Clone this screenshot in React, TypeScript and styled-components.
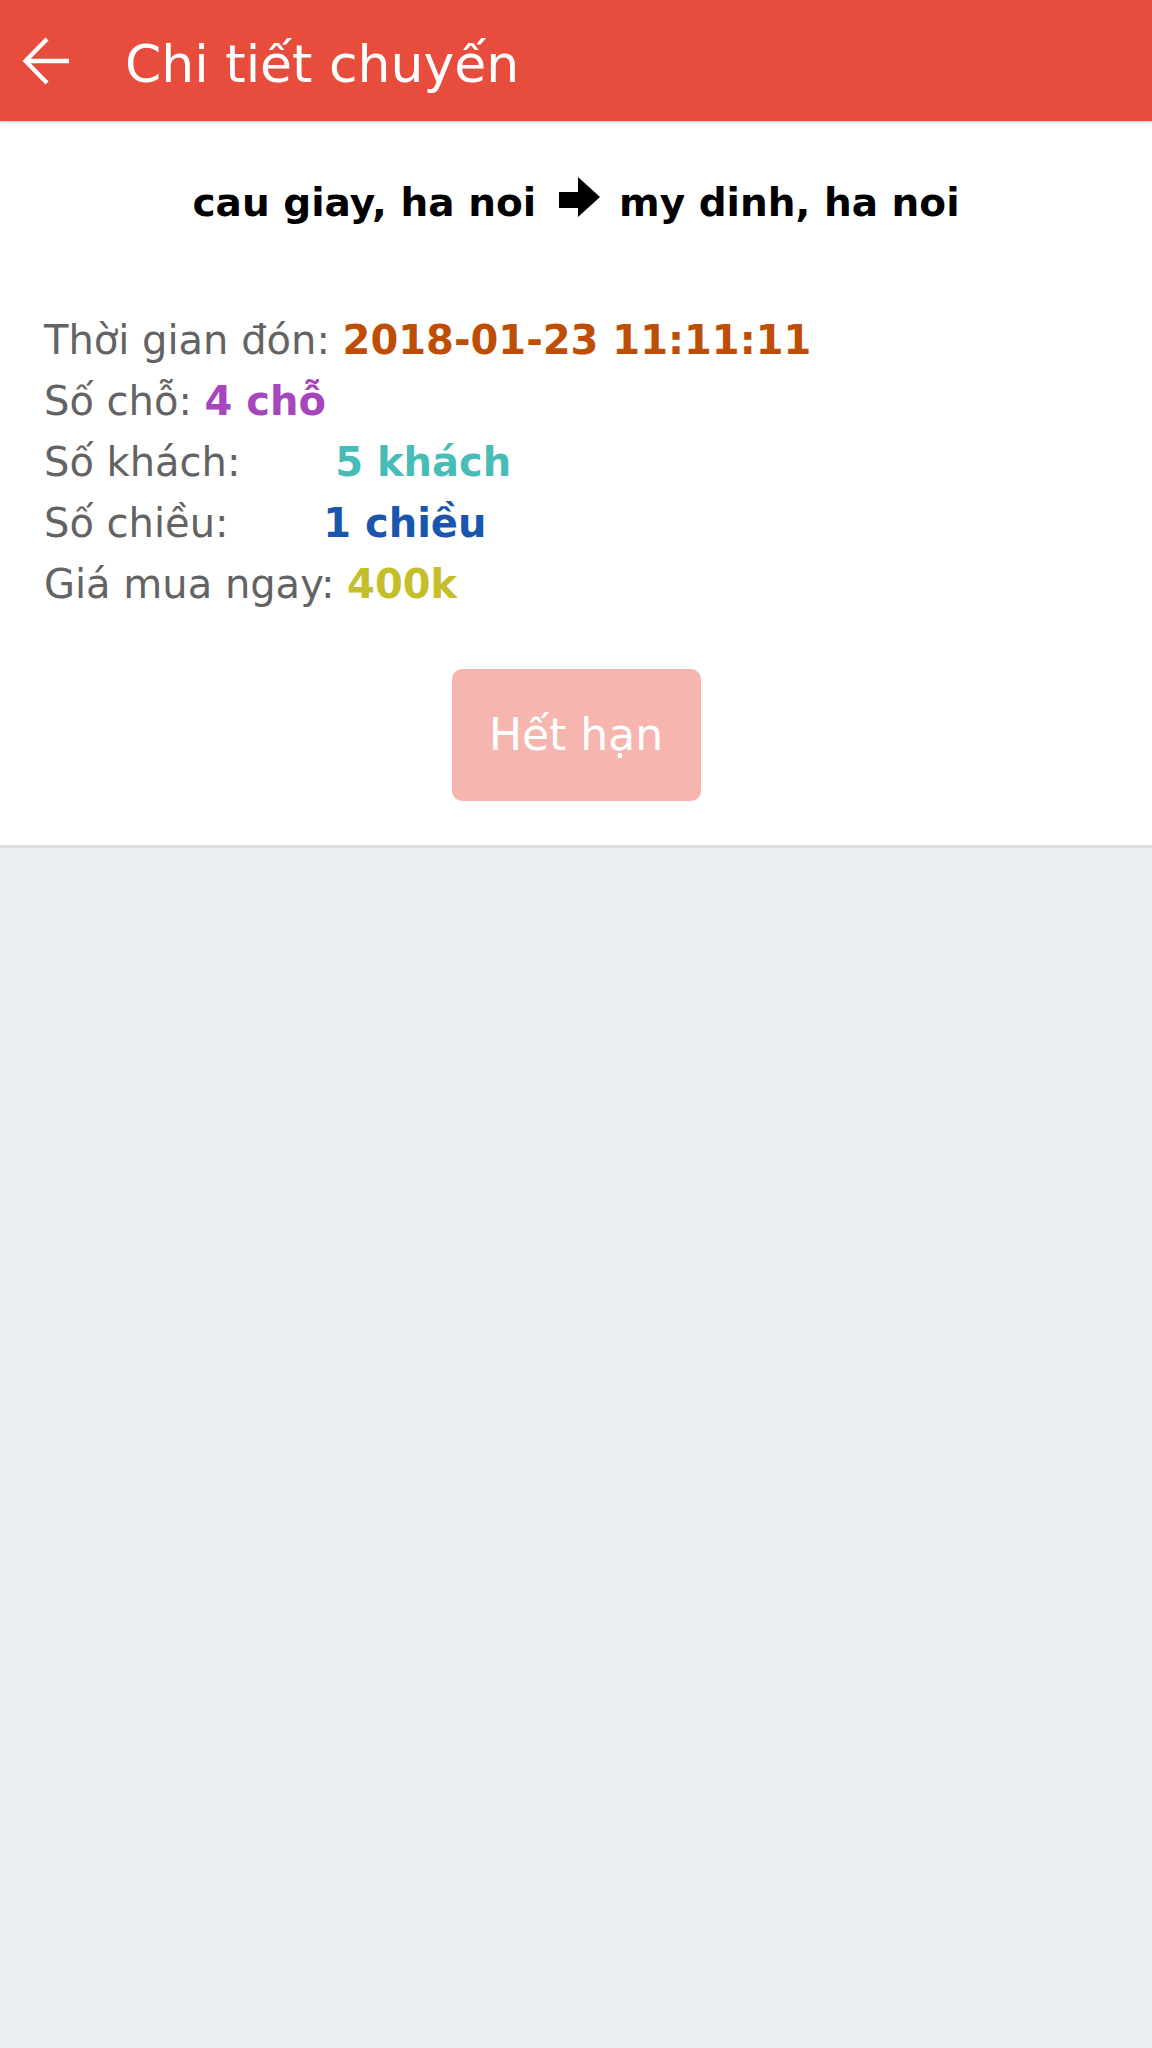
import React from "react";
import styled, { createGlobalStyle } from "styled-components";

const GlobalStyle = createGlobalStyle`
  html, body {
    margin: 0;
    padding: 0;
    background: #ecf0f3;
    font-family: "DejaVu Sans", "Noto Sans", sans-serif;
  }
  * { box-sizing: border-box; }
`;

const Screen = styled.div`
  width: 1152px;
  min-height: 2048px;
  background: #ecf0f3;
  display: flex;
  flex-direction: column;
`;

const Header = styled.header`
  height: 121px;
  background: #e74c3c;
  display: flex;
  align-items: center;
  padding-left: 22px;
  box-shadow: 0 1px 2px rgba(0, 0, 0, 0.25);
  position: relative;
  z-index: 1;
`;

const BackButton = styled.button`
  width: 48px;
  height: 48px;
  padding: 0;
  border: none;
  background: transparent;
  display: flex;
  align-items: center;
  justify-content: center;
  cursor: pointer;
`;

const Title = styled.h1`
  margin: 0 0 0 55px;
  padding-top: 6px;
  font-size: 52px;
  font-weight: normal;
  line-height: 60px;
  color: #ffffff;
`;

const Card = styled.section`
  background: #ffffff;
  border-bottom: 3px solid #dadde0;
  display: flex;
  flex-direction: column;
  padding: 56px 0 44px;
`;

const Route = styled.div`
  display: flex;
  justify-content: center;
  align-items: baseline;
  height: 52px;
  font-size: 39px;
  font-weight: bold;
  line-height: 52px;
  color: #000000;
  white-space: pre;
`;

const RouteArrow = styled.svg`
  width: 41px;
  height: 40px;
  margin: 0 19px 12px 23px;
  align-self: flex-end;
`;

const Info = styled.div`
  margin-top: 81px;
  padding-left: 44px;
  display: flex;
  flex-direction: column;
`;

const Row = styled.div`
  font-size: 40px;
  line-height: 61px;
  color: #636363;
  white-space: nowrap;
`;

const Value = styled.span<{ $color: string; $extra?: number }>`
  font-weight: bold;
  color: ${(p) => p.$color};
  margin-left: ${(p) => p.$extra ?? 0}px;
`;

const ButtonWrap = styled.div`
  display: flex;
  justify-content: center;
  margin-top: 54px;
`;

const ExpiredButton = styled.button`
  width: 249px;
  height: 132px;
  border: none;
  border-radius: 10px;
  background: #f7b5b0;
  color: #ffffff;
  font-family: "DejaVu Sans", sans-serif;
  font-size: 44px;
  line-height: 132px;
  padding: 0;
`;

const rows: { label: string; value: string; color: string; extra?: number }[] = [
  { label: "Thời gian đón:", value: "2018-01-23 11:11:11", color: "#bd4e04" },
  { label: "Số chỗ:", value: "4 chỗ", color: "#a546bc" },
  { label: "Số khách:", value: "5 khách", color: "#48bdb8", extra: 82 },
  { label: "Số chiều:", value: "1 chiều", color: "#1a56b0", extra: 82 },
  { label: "Giá mua ngay:", value: "400k", color: "#c4be2a" },
];

export default function App() {
  return (
    <>
      <GlobalStyle />
      <Screen>
        <Header>
          <BackButton aria-label="Quay lại">
            <svg width="48" height="48" viewBox="0 0 48 48" fill="none">
              <path
                d="M3 24 H47 M25 2 L3.5 24 L25 46"
                stroke="#ffffff"
                strokeWidth="4.3"
                strokeLinecap="butt"
                strokeLinejoin="miter"
              />
            </svg>
          </BackButton>
          <Title>Chi tiết chuyến</Title>
        </Header>
        <Card>
          <Route>
            <span>cau giay, ha noi</span>
            <RouteArrow viewBox="0 0 41 40">
              <path d="M0 15 H19 V0 L41 20 L19 40 V31 H0 Z" fill="#000000" />
            </RouteArrow>
            <span>my dinh, ha noi</span>
          </Route>
          <Info>
            {rows.map((r) => (
              <Row key={r.label}>
                {r.label}{" "}
                <Value $color={r.color} $extra={r.extra}>
                  {r.value}
                </Value>
              </Row>
            ))}
          </Info>
          <ButtonWrap>
            <ExpiredButton disabled>Hết hạn</ExpiredButton>
          </ButtonWrap>
        </Card>
      </Screen>
    </>
  );
}
